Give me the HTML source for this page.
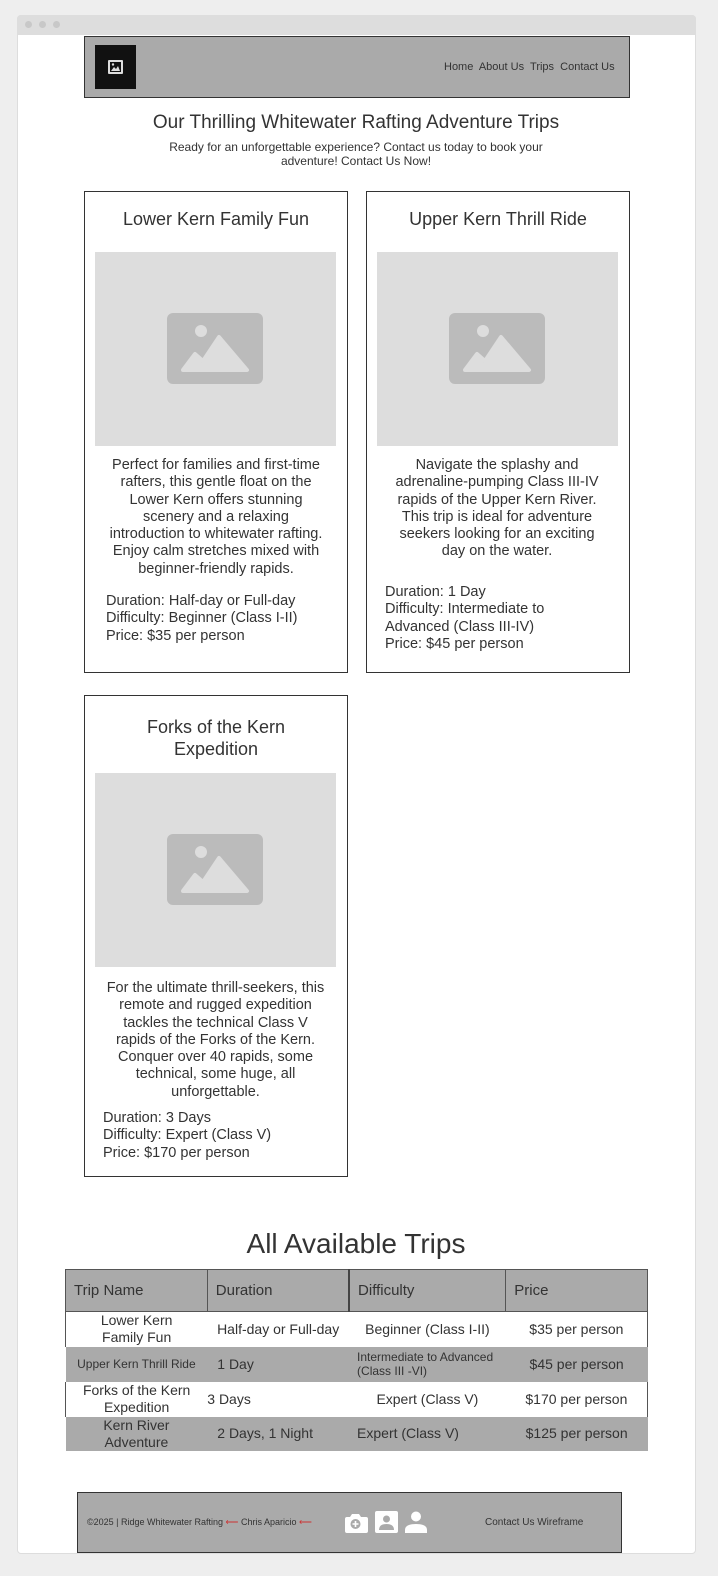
<!DOCTYPE html>
<html><head><meta charset="utf-8"><style>
*{box-sizing:border-box;margin:0;padding:0}
body{width:718px;height:1576px;background:#eee;font-family:"Liberation Sans",sans-serif;color:#333;position:relative;overflow:hidden}
.a{position:absolute}
.win{left:17px;top:15px;width:679px;height:1539px;background:#fff;border:1px solid #ddd;border-radius:4px}
.bar{left:17px;top:15px;width:679px;height:20px;background:#ddd;border-radius:4px 4px 0 0}
.dot{width:7px;height:7px;border-radius:50%;background:#c8c8c8;top:21px}
.card{border:1px solid #333;background:#fff}
.ct{text-align:center;font-size:18px;color:#333;line-height:22px}
.img{background:#ddd}
.p{font-size:14.5px;line-height:17.3px;text-align:center;color:#333;white-space:nowrap}
.d{font-size:14.5px;line-height:17.3px;color:#333}
table{border-collapse:collapse;font-size:14px;color:#333}
td{padding:0 4px;line-height:17px}
</style></head><body>
<div class="a win"></div>
<div class="a bar"></div>
<div class="a dot" style="left:25px"></div><div class="a dot" style="left:39px"></div><div class="a dot" style="left:53px"></div>

<div class="a" style="left:84px;top:36px;width:546px;height:62px;background:#aaa;border:1px solid #333"></div>
<div class="a" style="left:95px;top:45px;width:41px;height:44px;background:#111"></div>
<svg class="a" style="left:108px;top:60px" width="15" height="14" viewBox="0 0 15 14"><rect x="0" y="0" width="15" height="14" rx="1" fill="#ddd"/><rect x="2" y="2" width="11" height="10" fill="#111"/><path d="M3 11 L6 7 L8 9 L10 6 L12 11Z" fill="#ddd"/><circle cx="5" cy="4.5" r="1.2" fill="#ddd"/></svg>
<div class="a" style="left:444px;top:61px;font-size:11px;color:#333">Home&nbsp; About Us&nbsp; Trips&nbsp; Contact Us</div>

<div class="a" style="left:0;width:712px;top:112px;text-align:center;font-size:19px;color:#333">Our Thrilling Whitewater Rafting Adventure Trips</div>
<div class="a" style="left:156px;width:400px;top:140px;text-align:center;font-size:12px;line-height:14px;color:#333">Ready for an unforgettable experience? Contact us today to book your adventure! Contact Us Now!</div>

<!-- card 1 -->
<div class="a card" style="left:84px;top:191px;width:264px;height:482px"></div>
<div class="a ct" style="left:84px;width:264px;top:208px">Lower Kern Family Fun</div>
<div class="a img" style="left:95px;top:252px;width:241px;height:194px"></div>
<svg class="a" style="left:167px;top:313px" width="96" height="71" viewBox="0 0 96 71"><rect width="96" height="71" rx="6" fill="#bbb"/><circle cx="34" cy="18" r="6" fill="#ddd"/><path d="M16 57 L28 41 L36 48 L52 24 L80 57Z" fill="#ddd" stroke="#ddd" stroke-width="4" stroke-linejoin="round"/></svg>
<div class="a p" style="left:96px;width:240px;top:457px">Perfect for families and first-time<br>rafters, this gentle float on the<br>Lower Kern offers stunning<br>scenery and a relaxing<br>introduction to whitewater rafting.<br>Enjoy calm stretches mixed with<br>beginner-friendly rapids.</div>
<div class="a d" style="left:106px;top:593px">Duration: Half-day or Full-day<br>Difficulty: Beginner (Class I-II)<br>Price: $35 per person</div>

<!-- card 2 -->
<div class="a card" style="left:366px;top:191px;width:264px;height:482px"></div>
<div class="a ct" style="left:366px;width:264px;top:208px">Upper Kern Thrill Ride</div>
<div class="a img" style="left:377px;top:252px;width:241px;height:194px"></div>
<svg class="a" style="left:449px;top:313px" width="96" height="71" viewBox="0 0 96 71"><rect width="96" height="71" rx="6" fill="#bbb"/><circle cx="34" cy="18" r="6" fill="#ddd"/><path d="M16 57 L28 41 L36 48 L52 24 L80 57Z" fill="#ddd" stroke="#ddd" stroke-width="4" stroke-linejoin="round"/></svg>
<div class="a p" style="left:377px;width:240px;top:457px">Navigate the splashy and<br>adrenaline-pumping Class III-IV<br>rapids of the Upper Kern River.<br>This trip is ideal for adventure<br>seekers looking for an exciting<br>day on the water.</div>
<div class="a d" style="left:385px;top:584px">Duration: 1 Day<br>Difficulty: Intermediate to<br>Advanced (Class III-IV)<br>Price: $45 per person</div>

<!-- card 3 -->
<div class="a card" style="left:84px;top:695px;width:264px;height:482px"></div>
<div class="a ct" style="left:84px;width:264px;top:716px">Forks of the Kern<br>Expedition</div>
<div class="a img" style="left:95px;top:773px;width:241px;height:194px"></div>
<svg class="a" style="left:167px;top:834px" width="96" height="71" viewBox="0 0 96 71"><rect width="96" height="71" rx="6" fill="#bbb"/><circle cx="34" cy="18" r="6" fill="#ddd"/><path d="M16 57 L28 41 L36 48 L52 24 L80 57Z" fill="#ddd" stroke="#ddd" stroke-width="4" stroke-linejoin="round"/></svg>
<div class="a p" style="left:95px;width:241px;top:980px">For the ultimate thrill-seekers, this<br>remote and rugged expedition<br>tackles the technical Class V<br>rapids of the Forks of the Kern.<br>Conquer over 40 rapids, some<br>technical, some huge, all<br>unforgettable.</div>
<div class="a d" style="left:103px;top:1110px">Duration: 3 Days<br>Difficulty: Expert (Class V)<br>Price: $170 per person</div>

<div class="a" style="left:0;width:712px;top:1228px;text-align:center;font-size:28px;color:#333">All Available Trips</div>

<table class="a" style="left:65px;top:1269px;width:583px">
<colgroup><col style="width:142px"><col style="width:142px"><col style="width:157px"><col style="width:142px"></colgroup>
<tr style="height:42px;background:#aaa"><td style="border:1px solid #555;padding-left:8px;font-size:15px">Trip Name</td><td style="border:1px solid #555;padding-left:8px;font-size:15px">Duration</td><td style="border:1px solid #555;border-left:2px solid #444;padding-left:8px;font-size:15px">Difficulty</td><td style="border:1px solid #555;padding-left:8px;font-size:15px">Price</td></tr>
<tr style="height:35px;background:#fff"><td style="text-align:center;border-left:1px solid #555">Lower Kern<br>Family Fun</td><td style="text-align:center">Half-day or Full-day</td><td style="text-align:center">Beginner (Class I-II)</td><td style="text-align:center;border-right:1px solid #555">$35 per person</td></tr>
<tr style="height:35px;background:#aaa"><td style="text-align:center;font-size:12px">Upper Kern Thrill Ride</td><td style="padding-left:10px">1 Day</td><td style="font-size:12px;line-height:14px;padding-left:8px">Intermediate to Advanced<br>(Class III -VI)</td><td style="text-align:center">$45 per person</td></tr>
<tr style="height:35px;background:#fff"><td style="text-align:center;border-left:1px solid #555">Forks of the Kern<br>Expedition</td><td style="padding-left:0">3 Days</td><td style="text-align:center">Expert (Class V)</td><td style="text-align:center;border-right:1px solid #555">$170 per person</td></tr>
<tr style="height:34px;background:#aaa"><td style="text-align:center">Kern River<br>Adventure</td><td style="padding-left:10px">2 Days, 1 Night</td><td style="padding-left:8px">Expert (Class V)</td><td style="text-align:center">$125 per person</td></tr>
</table>

<div class="a" style="left:77px;top:1492px;width:545px;height:61px;background:#aaa;border:1px solid #333"></div>
<div class="a" style="left:87px;top:1517px;font-size:9px;color:#333">©2025 | Ridge Whitewater Rafting <span style="color:#c33">⟵</span> Chris Aparicio <span style="color:#c33">⟵</span></div>
<svg class="a" style="left:343px;top:1510px" width="85" height="24" viewBox="0 0 85 24"><path d="M2 7 h5 l2-3 h7 l2 3 h5 a2 2 0 0 1 2 2 v12 a2 2 0 0 1-2 2 h-19 a2 2 0 0 1-2-2 v-12 a2 2 0 0 1 2-2z" fill="#fff"/><circle cx="12.5" cy="14" r="5" fill="#aaa"/><path d="M12.5 11 v6 M9.5 14 h6" stroke="#fff" stroke-width="1.6"/><rect x="32" y="1" width="23" height="22" rx="2" fill="#fff"/><circle cx="43.5" cy="9" r="3.5" fill="#aaa"/><path d="M36 20 q0-6 7.5-6 q7.5 0 7.5 6z" fill="#aaa"/><circle cx="73" cy="6.5" r="5" fill="#fff"/><path d="M62 23 v-3 q0-6 11-6 q11 0 11 6 v3z" fill="#fff"/></svg>
<div class="a" style="left:485px;top:1517px;font-size:10px;color:#333">Contact Us Wireframe</div>
</body></html>
